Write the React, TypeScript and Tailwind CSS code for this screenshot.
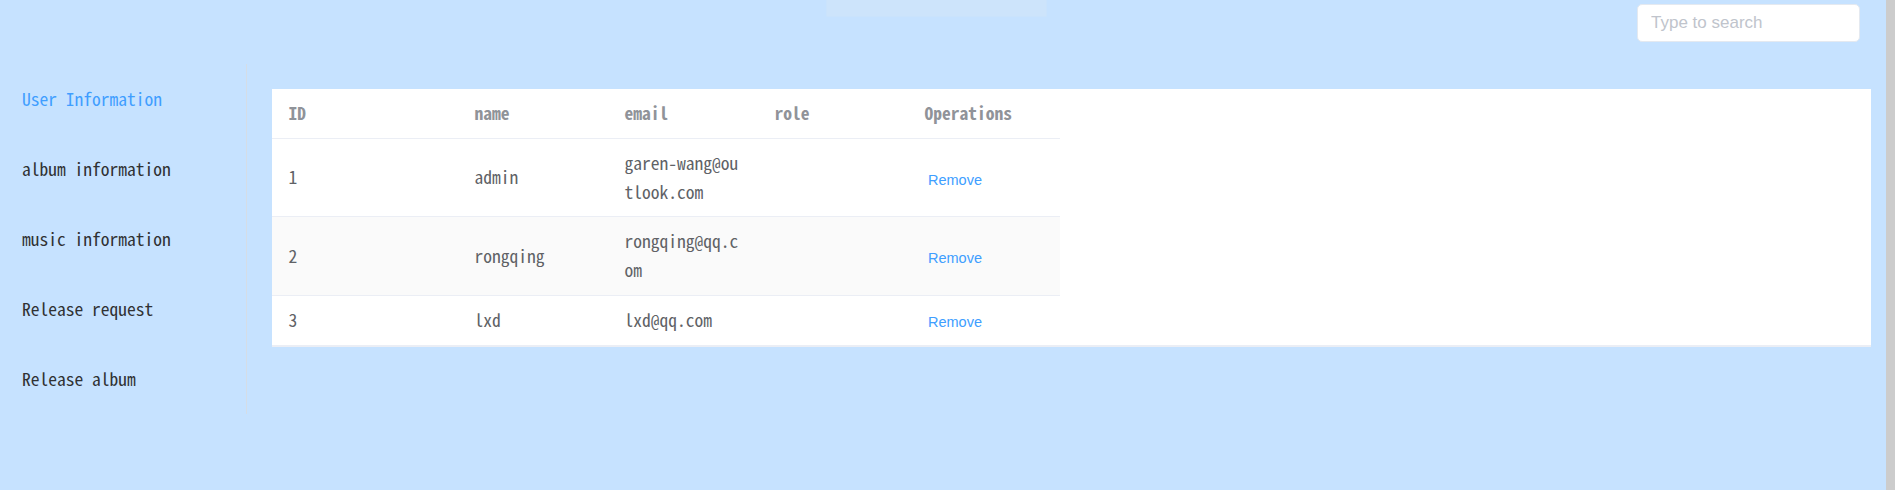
import React from "react";

const MONO = { fontFamily: '"Noto Sans Mono CJK SC", "Liberation Mono", monospace' };

const menu = [
  { label: "User Information", active: true },
  { label: "album information" },
  { label: "music information" },
  { label: "Release request" },
  { label: "Release album" },
];

const rows = [
  { id: "1", name: "admin", email: "garen-wang@outlook.com", role: "" },
  { id: "2", name: "rongqing", email: "rongqing@qq.com", role: "" },
  { id: "3", name: "lxd", email: "lxd@qq.com", role: "" },
];

const GRID = "grid grid-cols-[190px_150px_150px_150px_148px] w-[788px]";

export default function App() {
  return (
    <div className="flex h-[490px] w-[1895px] overflow-hidden bg-[#c6e2ff]" style={MONO}>
      <div className="flex min-w-0 flex-1 flex-col">
        {/* header */}
        <div className="flex h-[64px] shrink-0 items-start">
          <div className="ml-[826px] h-[17px] w-[221px] rounded-b-[2px] border border-t-0 border-[#cae3fc] bg-[#cde4fb]" />
          <div className="ml-auto mr-[26px] mt-[4px] flex h-[38px] w-[223px] items-center rounded-[5px] border border-[#e4e9f0] bg-white pl-[13px]">
            <input
              placeholder="Type to search"
              className="w-full bg-transparent text-[17px] text-[#606266] outline-none placeholder:text-[#c0c4cc]"
              style={{ fontFamily: '"Liberation Sans", Arial, sans-serif' }}
            />
          </div>
        </div>
        {/* body */}
        <div className="flex flex-1">
          <aside className="h-[350px] w-[247px] shrink-0 border-r border-[#d5dde6]">
            {menu.map((m) => (
              <div
                key={m.label}
                className={`flex h-[70px] items-center pl-[22px] text-[17.5px] ${
                  m.active ? "text-[#409eff]" : "text-[#303133]"
                }`}
              >
                {m.label}
              </div>
            ))}
          </aside>
          <main className="min-w-0 flex-1 pl-[25px] pr-[15px] pt-[25px]">
            <div className="border-b-2 border-[#ebeef5] bg-white text-[17.5px] leading-[28.75px]">
              <div className={`${GRID} border-b border-[#ebeef5] font-bold text-[#909399]`}>
                <div className="py-[10px] pl-[16.5px]">ID</div>
                <div className="py-[10px] pl-[12.5px]">name</div>
                <div className="py-[10px] pl-[12.5px]">email</div>
                <div className="py-[10px] pl-[12.5px]">role</div>
                <div className="py-[10px] pl-[12.5px]">Operations</div>
              </div>
              {rows.map((r, i) => (
                <div
                  key={r.id}
                  className={`${GRID} text-[#606266] ${i < rows.length - 1 ? "border-b border-[#ebeef5]" : ""} ${
                    i === 1 ? "bg-[#fafafa]" : "bg-white"
                  }`}
                >
                  <div className="flex items-center py-[10px] pl-[16.5px]">{r.id}</div>
                  <div className="flex items-center py-[10px] pl-[12.5px]">{r.name}</div>
                  <div className="flex items-center py-[10px] pl-[12.5px]">
                    <div className="w-[118px] break-all">{r.email}</div>
                  </div>
                  <div className="flex items-center py-[10px] pl-[12.5px]">{r.role}</div>
                  <div className="flex items-center py-[10px] pl-[12.5px]">
                    <button
                      className="mt-[4px] pl-[3.5px] text-[14.5px] leading-[20px] text-[#409eff]"
                      style={{ fontFamily: '"Liberation Sans", Arial, sans-serif' }}
                    >
                      Remove
                    </button>
                  </div>
                </div>
              ))}
            </div>
          </main>
        </div>
      </div>
      <div className="h-full w-[9px] shrink-0 bg-[#cccccc]" />
    </div>
  );
}
